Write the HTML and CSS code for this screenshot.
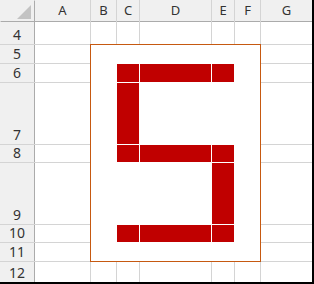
FILE: index.html
```html
<!DOCTYPE html>
<html>
<head>
<meta charset="utf-8">
<link rel="stylesheet" href="styles.css">
</head>
<body>
<div class="sheet">
  <div class="corner hdr">
    <svg class="tri" width="34" height="21" viewBox="0 0 34 21"><polygon points="31,5 31,19 17,19" fill="#c3c3c3"/></svg>
  </div>
  <div class="col hdr">A</div>
  <div class="col hdr">B</div>
  <div class="col hdr">C</div>
  <div class="col hdr">D</div>
  <div class="col hdr">E</div>
  <div class="col hdr">F</div>
  <div class="col hdr">G</div>

  <div class="row hdr r4">4</div>
  <div class="row hdr r5">5</div>
  <div class="row hdr r6">6</div>
  <div class="row hdr r7">7</div>
  <div class="row hdr r8">8</div>
  <div class="row hdr r9">9</div>
  <div class="row hdr r10">10</div>
  <div class="row hdr r11">11</div>
  <div class="row hdr r12">12</div>

  <!-- row 4 -->
  <div class="cell ca r4"></div><div class="cell cb r4"></div><div class="cell cc r4"></div><div class="cell cd r4"></div><div class="cell ce r4"></div><div class="cell cf r4"></div><div class="cell cg r4"></div>
  <!-- column A rows 5-11 -->
  <div class="cell ca r5"></div><div class="cell ca r6"></div><div class="cell ca r7"></div><div class="cell ca r8"></div><div class="cell ca r9"></div><div class="cell ca r10"></div><div class="cell ca r11"></div>
  <!-- column G rows 5-11 -->
  <div class="cell cg r5"></div><div class="cell cg r6"></div><div class="cell cg r7"></div><div class="cell cg r8"></div><div class="cell cg r9"></div><div class="cell cg r10"></div><div class="cell cg r11"></div>
  <!-- row 12 -->
  <div class="cell ca r12"></div><div class="cell cb r12"></div><div class="cell cc r12"></div><div class="cell cd r12"></div><div class="cell ce r12"></div><div class="cell cf r12"></div><div class="cell cg r12"></div>

  <div class="frame">
    <div class="fill c-c r-6"></div>
    <div class="fill c-d r-6"></div>
    <div class="fill c-e r-6"></div>
    <div class="fill c-c r-7"></div>
    <div class="fill c-c r-8"></div>
    <div class="fill c-d r-8"></div>
    <div class="fill c-e r-8"></div>
    <div class="fill c-e r-9"></div>
    <div class="fill c-c r-10"></div>
    <div class="fill c-d r-10"></div>
    <div class="fill c-e r-10"></div>
  </div>
</div>
</body>
</html>
```
FILE: styles.css
```css
html, body {
  margin: 0;
  padding: 0;
  background: #000;
  width: 314px;
  height: 284px;
  overflow: hidden;
}

.sheet {
  display: grid;
  grid-template-columns: 34px 55px 25px 22px 71px 22px 25px 51px;
  grid-template-rows: 21px 22px 18px 18px 61px 17px 61px 17px 18px 20px;
  gap: 1px;
  width: 312px;
  height: 282px;
  background: #d4d4d4;
  font-family: "Noto Sans", "Open Sans", sans-serif;
  color: #333;
}

.hdr {
  background: #f0f0f0;
}

.corner {
  grid-column: 1;
  grid-row: 1;
  box-shadow: 1px 1px 0 #ababab;
  position: relative;
}

.tri {
  display: block;
}

.col {
  grid-row: 1;
  font-size: 13px;
  line-height: 21px;
  text-align: center;
  box-shadow: 0 1px 0 #ababab;
}

.row {
  grid-column: 1;
  font-size: 14px;
  line-height: 16px;
  text-align: center;
  display: flex;
  align-items: flex-end;
  justify-content: center;
  padding-bottom: 1px;
  box-sizing: border-box;
  box-shadow: 1px 0 0 #ababab;
}

.cell { background: #fff; }

.ca { grid-column: 2; }
.cb { grid-column: 3; }
.cc { grid-column: 4; }
.cd { grid-column: 5; }
.ce { grid-column: 6; }
.cf { grid-column: 7; }
.cg { grid-column: 8; }

.r4 { grid-row: 2; }
.r5 { grid-row: 3; }
.r6 { grid-row: 4; }
.r7 { grid-row: 5; }
.r8 { grid-row: 6; }
.r9 { grid-row: 7; }
.r10 { grid-row: 8; }
.r11 { grid-row: 9; }
.r12 { grid-row: 10; }

.frame {
  grid-column: 3 / 8;
  grid-row: 3 / 10;
  background: #fff;
  outline: 1px solid #c65911;
  display: grid;
  grid-template-columns: 25px 22px 71px 22px 25px;
  grid-template-rows: 18px 18px 61px 17px 61px 17px 18px;
  gap: 1px;
}

.fill { background: #c00000; }

.c-c { grid-column: 2; }
.c-d { grid-column: 3; }
.c-e { grid-column: 4; }

.r-6 { grid-row: 2; }
.r-7 { grid-row: 3; }
.r-8 { grid-row: 4; }
.r-9 { grid-row: 5; }
.r-10 { grid-row: 6; }
```
